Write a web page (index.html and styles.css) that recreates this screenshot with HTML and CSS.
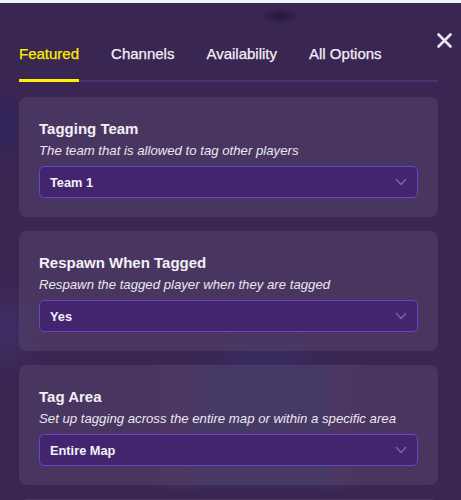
FILE: index.html
```html
<!DOCTYPE html>
<html>
<head>
<meta charset="utf-8">
<link rel="stylesheet" href="styles.css">
</head>
<body>
<div class="topstrip"></div>
<div class="modal">
  <button class="close" aria-label="Close">
    <svg width="15" height="15" viewBox="0 0 15 15"><path d="M1.5 1.5 L13.5 13.5 M13.5 1.5 L1.5 13.5" stroke="#ebe8f1" stroke-width="2.6" stroke-linecap="round"/></svg>
  </button>
  <nav class="tabs">
    <div class="tab active">Featured</div>
    <div class="tab">Channels</div>
    <div class="tab">Availability</div>
    <div class="tab">All Options</div>
  </nav>
  <div class="cards">
    <section class="card">
      <h2 class="title">Tagging Team</h2>
      <p class="desc">The team that is allowed to tag other players</p>
      <div class="select"><span>Team 1</span><svg class="chev" width="12" height="8" viewBox="0 0 12 8"><path d="M1 1 L6 6.5 L11 1" fill="none" stroke="#7f62ba" stroke-width="1.2"/></svg></div>
    </section>
    <section class="card">
      <h2 class="title">Respawn When Tagged</h2>
      <p class="desc">Respawn the tagged player when they are tagged</p>
      <div class="select"><span>Yes</span><svg class="chev" width="12" height="8" viewBox="0 0 12 8"><path d="M1 1 L6 6.5 L11 1" fill="none" stroke="#7f62ba" stroke-width="1.2"/></svg></div>
    </section>
    <section class="card">
      <h2 class="title">Tag Area</h2>
      <p class="desc">Set up tagging across the entire map or within a specific area</p>
      <div class="select"><span>Entire Map</span><svg class="chev" width="12" height="8" viewBox="0 0 12 8"><path d="M1 1 L6 6.5 L11 1" fill="none" stroke="#7f62ba" stroke-width="1.2"/></svg></div>
    </section>
    <section class="card"></section>
  </div>
</div>
</body>
</html>
```
FILE: styles.css
```css
html, body {
  margin: 0;
  padding: 0;
  height: 100%;
  overflow: hidden;
}
body {
  background-color: #3a2653;
  background-image:
    radial-gradient(ellipse 22px 40px at 4px 125px, rgba(38,36,100,0.6), transparent),
    radial-gradient(ellipse 40px 50px at 8px 330px, rgba(70,60,130,0.4), transparent),
    linear-gradient(to right, rgba(110,55,95,0) 150px, rgba(110,55,95,0.2) 175px, rgba(100,55,100,0.2) 188px, rgba(45,60,120,0.32) 200px, rgba(45,60,120,0.32) 325px, rgba(110,55,95,0.18) 338px, rgba(110,55,95,0) 365px),
    radial-gradient(ellipse 70px 25px at 265px 352px, rgba(50,55,125,0.3), transparent),
    radial-gradient(ellipse 20px 9px at 280px 16px, rgba(35,22,60,0.9), transparent);
  background-repeat: no-repeat;
  background-size: auto, auto, 100% 125px, auto, auto;
  background-position: 0 0, 0 0, 0 364px, 0 0, 0 0;
  font-family: "Liberation Sans", Arial, sans-serif;
  color: #f2eff6;
}
.topstrip {
  height: 3px;
  background: #f1f4f8;
}
.modal {
  position: relative;
  padding: 41px 23px 0 19px;
}
.close {
  position: absolute;
  top: 30px;
  right: 9px;
  width: 15px;
  height: 15px;
  padding: 0;
  border: 0;
  background: none;
  display: flex;
}
.tabs {
  display: flex;
  gap: 32px;
  border-bottom: 2px solid #4a3372;
}
.tab {
  font-size: 15px;
  line-height: 20px;
  padding-bottom: 15px;
  margin-bottom: -2px;
  border-bottom: 3px solid transparent;
  color: #f3f0f7;
  -webkit-text-stroke: 0.25px currentColor;
}
.tab.active {
  color: #fff000;
  border-bottom-color: #fff000;
}
.cards {
  display: flex;
  flex-direction: column;
  gap: 14px;
  margin-top: 15px;
}
.card {
  flex: none;
  background: rgba(85, 68, 108, 0.55);
  border-radius: 8px;
  padding: 22px 20px 0;
  height: 120px;
  box-sizing: border-box;
}
.title {
  margin: 0;
  font-size: 15px;
  font-weight: 700;
  line-height: 20px;
  color: #f3f0f7;
}
.desc {
  margin: 3px 0 6px;
  font-size: 13.2px;
  font-style: italic;
  line-height: 18px;
  color: #ebe7f1;
}
.select {
  height: 32px;
  box-sizing: border-box;
  border: 1px solid #6a45c3;
  background: #43246f;
  border-radius: 5px;
  display: flex;
  align-items: center;
  justify-content: space-between;
  padding: 0 10px 0 10px;
  font-size: 12.8px;
  font-weight: 700;
  color: #f3f0f7;
}
```
